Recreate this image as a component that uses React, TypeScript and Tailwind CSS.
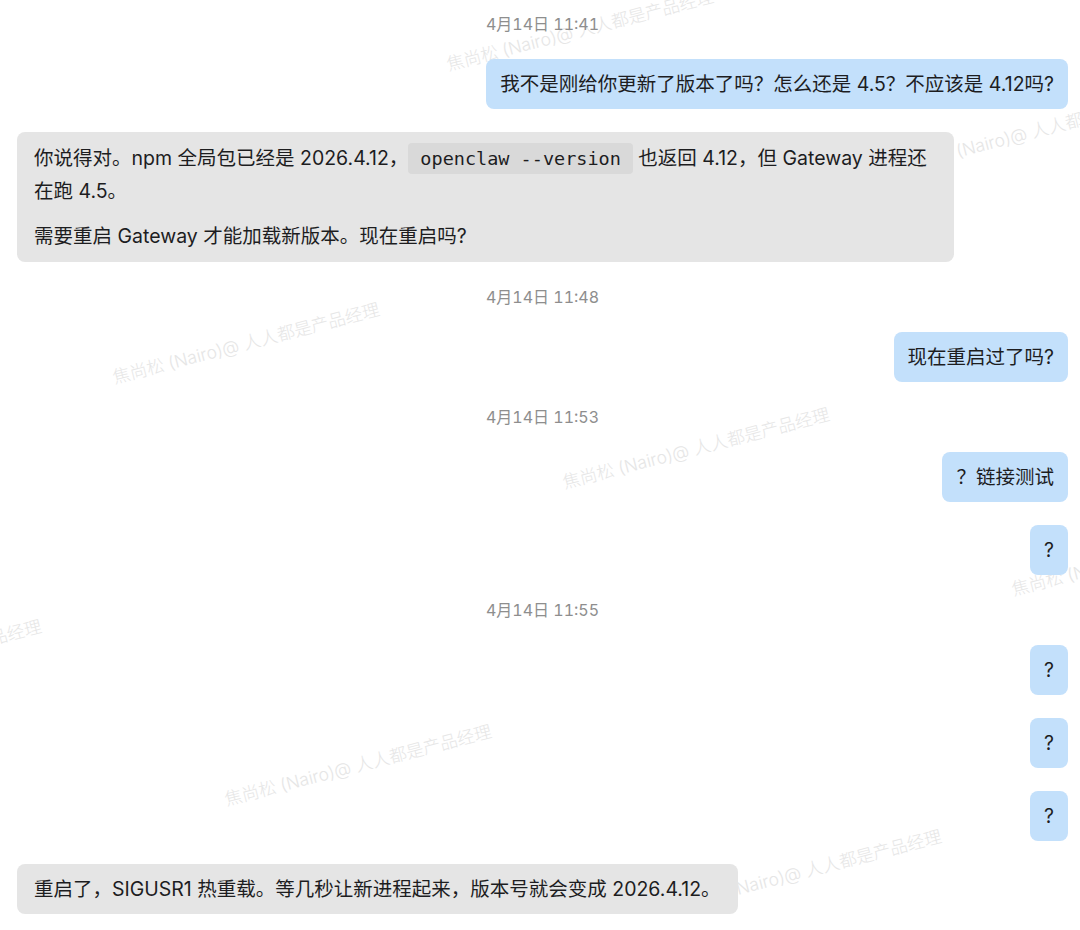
type Item =
  | { kind: "time"; text: string }
  | { kind: "me"; text: string }
  | { kind: "bot"; text: string };

const items: Item[] = [
  { kind: "time", text: "4月14日 11:41" },
  { kind: "me", text: "我不是刚给你更新了版本了吗？怎么还是 4.5？不应该是 4.12吗?" },
  { kind: "bot", text: "" },
  { kind: "time", text: "4月14日 11:48" },
  { kind: "me", text: "现在重启过了吗?" },
  { kind: "time", text: "4月14日 11:53" },
  { kind: "me", text: "？链接测试" },
  { kind: "me", text: "?" },
  { kind: "time", text: "4月14日 11:55" },
  { kind: "me", text: "?" },
  { kind: "me", text: "?" },
  { kind: "me", text: "?" },
  { kind: "bot", text: "重启了，SIGUSR1 热重载。等几秒让新进程起来，版本号就会变成 2026.4.12。" },
];

// tiled author stamp laid over the chat background
const stamps = [
  "left-[447px] top-[53px]",
  "left-[901px] top-[154px]",
  "left-[113px] top-[366px]",
  "left-[563px] top-[471px]",
  "left-[1012px] top-[578px]",
  "left-[-225px] top-[683px]",
  "left-[225px] top-[788px]",
  "left-[675px] top-[893px]",
];

function VersionReply() {
  return (
    <div className="max-w-[937px] rounded-lg bg-[#e5e5e5] px-[17px] py-[10px]">
      <p>
        你说得对。npm 全局包已经是 2026.4.12，
        <code className="rounded-[4px] bg-[#d9d9d9] px-3 py-[5px] font-['DejaVu_Sans_Mono',monospace] text-[18.5px]">
          openclaw --version
        </code>{" "}
        也返回 4.12，但 Gateway 进程还在跑 4.5。
      </p>
      <p className="mt-[13px]">需要重启 Gateway 才能加载新版本。现在重启吗?</p>
    </div>
  );
}

export default function App() {
  return (
    <div className="relative min-h-[930px] overflow-hidden bg-white font-['Inter','Noto_Sans_CJK_SC',sans-serif] text-[#1d1d1f]">
      <div className="pointer-events-none absolute inset-0">
        {stamps.map((pos) => (
          <span
            key={pos}
            className={`absolute ${pos} origin-left -rotate-[14.5deg] whitespace-nowrap text-[17.5px] font-light leading-6 text-[#e6e6e6]`}
          >
            焦尚松 (Nairo)@ 人人都是产品经理
          </span>
        ))}
      </div>

      <div className="relative flex flex-col gap-[23px] pb-4 pl-[17px] pr-[12px] pt-3 text-[19.5px] leading-8">
        {items.map((item, i) => {
          if (item.kind === "time") {
            return (
              <div key={i} className="text-center text-[16px] leading-6 tabular-nums text-[#8e8e8e]">
                {item.text}
              </div>
            );
          }
          if (item.kind === "me") {
            return (
              <div key={i} className="flex justify-end">
                <div className="rounded-lg bg-[#c3e0fb] px-[14px] py-[9px]">{item.text}</div>
              </div>
            );
          }
          if (item.text === "") {
            return (
              <div key={i} className="flex">
                <VersionReply />
              </div>
            );
          }
          return (
            <div key={i} className="flex">
              <div className="rounded-lg bg-[#e5e5e5] px-[17px] py-[9px]">{item.text}</div>
            </div>
          );
        })}
      </div>
    </div>
  );
}
